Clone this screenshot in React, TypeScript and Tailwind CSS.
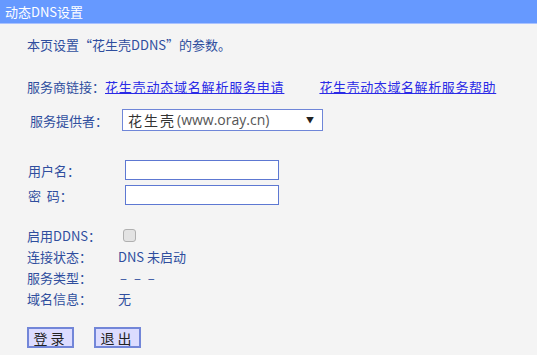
import { useState } from "react";

const font = { fontFamily: '"Noto Sans CJK SC", "Noto Sans", sans-serif' };

function Row({ label, children, className = "" }: { label: string; children?: React.ReactNode; className?: string }) {
  return (
    <div className={`flex items-center h-[21px] ${className}`}>
      <span className="w-[91px] shrink-0">{label}</span>
      {children}
    </div>
  );
}

export default function App() {
  const [enabled, setEnabled] = useState(false);

  return (
    <div className="w-[537px] h-[355px] bg-[#f4f4f4] text-[13px] leading-none text-[#2f4e9e] overflow-hidden" style={font}>
      <div className="h-[24px] bg-[#6699ff] border-b border-[#a9c2ff] flex items-center pl-[5px] text-white text-[13px]">
        动态DNS设置
      </div>

      <div className="pl-[27px]">
        <div className="h-5 mt-[10px] flex items-center">本页设置“花生壳DDNS”的参数。</div>

        <div className="h-5 mt-[22px] flex items-center">
          <span>服务商链接：</span>
          <a href="#" className="text-[#2a2ae6] underline tracking-[0.8px]">花生壳动态域名解析服务申请</a>
          <a href="#" className="ml-[35px] text-[#2a2ae6] underline tracking-[0.6px]">花生壳动态域名解析服务帮助</a>
        </div>

        <div className="flex items-center mt-[13px] h-[22px]">
          <span className="w-[95px] pl-[3px] shrink-0">服务提供者：</span>
          <div className="w-[201px] h-[22px] bg-white border border-[#6f86d8] flex items-center justify-between pl-[5px] pr-[8px]">
            <span className="text-[#333] flex items-center">
              <span className="text-[14px] tracking-[2px]">花生壳</span>
              <span className="text-[#555] text-[14px] ml-[1px]" style={{ fontFamily: '"Open Sans", sans-serif' }}>(www.oray.cn)</span>
            </span>
            <span className="text-[8px] text-[#222]">▼</span>
          </div>
        </div>

        <div className="flex items-center mt-[29px] h-[20px]">
          <span className="w-[98px] pl-[1px] shrink-0">用户名：</span>
          <input className="w-[154px] h-[20px] bg-white border border-[#5d78d2] outline-none" />
        </div>
        <div className="flex items-center mt-[5px] h-[20px]">
          <span className="w-[98px] pl-[1px] shrink-0">密&nbsp;&nbsp;码：</span>
          <input type="password" className="w-[154px] h-[20px] bg-white border border-[#5d78d2] outline-none" />
        </div>

        <div className="mt-[20px]">
          <Row label="启用DDNS：">
            <input
              type="checkbox"
              checked={enabled}
              onChange={(e) => setEnabled(e.target.checked)}
              className="ml-[5px] w-[13px] h-[13px] appearance-none bg-[#e3e3e3] border border-[#b0b0b0] rounded-[3px]"
            />
          </Row>
          <Row label="连接状态：">DNS 未启动</Row>
          <Row label="服务类型：">
            <span className="ml-[2px] tracking-[2px]">– – –</span>
          </Row>
          <Row label="域名信息：">无</Row>
        </div>

        <div className="flex gap-[20px] mt-[18px]">
          <button className="w-[47px] h-[21px] bg-[#dcdcff] border-2 border-[#7286d8] text-[#222] text-[14px] tracking-[3px] flex items-center justify-center">登录</button>
          <button className="w-[47px] h-[21px] bg-[#dcdcff] border-2 border-[#7286d8] text-[#222] text-[14px] tracking-[3px] flex items-center justify-center">退出</button>
        </div>
      </div>
    </div>
  );
}
